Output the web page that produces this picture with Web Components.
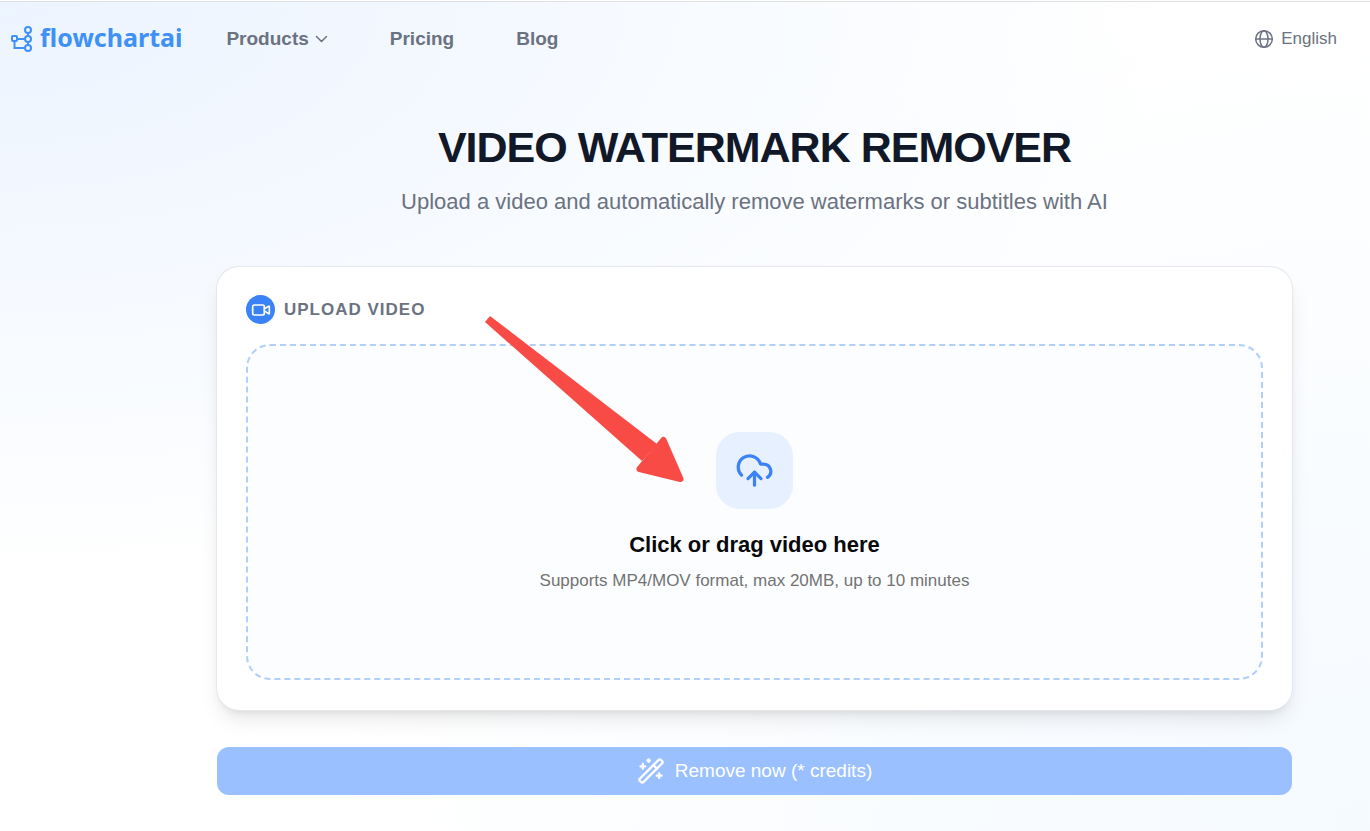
<!DOCTYPE html>
<html lang="en">
<head>
    <meta charset="UTF-8">
    <meta name="viewport" content="width=device-width, initial-scale=1.0">
    <title>Video Watermark Remover</title>
    <style>
        :root {
            --blue: #3b82f6;
            --gray: #6b7280;
            --ink: #111827;
        }

        body {
            margin: 0;
            font-family: "Liberation Sans", Arial, sans-serif;
            color: var(--ink);
        }
    </style>
</head>
<body>
    <template id="app-page">
        <style>
            :host {
                display: block;
                box-sizing: border-box;
                min-height: 100vh;
                border-top: 1px solid #fff;
                background:
                    radial-gradient(ellipse 85% 70% at 0 0, #ecf4ff, rgba(255, 255, 255, 0)),
                    radial-gradient(ellipse 75% 100% at 100% 100%, #f5faff, rgba(255, 255, 255, 0)),
                    #fff;
            }
            main {
                padding: 42px 78px 36px 217px;
            }
        </style>
        <slot name="header"></slot>
        <main><slot></slot></main>
    </template>

    <template id="site-header">
        <style>
            :host {
                display: flex;
                align-items: center;
                height: 73px;
                padding: 0 33px 0 10px;
                border-top: 1px solid #dedfe1;
            }
            .logo {
                display: flex;
                align-items: center;
                gap: 7px;
                color: #4091f7;
                font: bold 25px/32px "Noto Sans", sans-serif;
                text-decoration: none;
            }
            .logo span {
                padding-bottom: 3px;
            }
            nav {
                display: flex;
                gap: 62px;
                flex: 1;
                margin-left: 44px;
            }
            ::slotted(*) {
                color: var(--gray);
            }
        </style>
        <a class="logo" href="#">
            <svg width="23" height="28" viewBox="0 0 23 28" fill="none" stroke="currentColor" stroke-width="2" aria-hidden="true">
                <rect x="2" y="11" width="5" height="5" rx="1"/>
                <circle cx="18" cy="5" r="3"/>
                <circle cx="18" cy="14" r="3"/>
                <circle cx="18" cy="23" r="3"/>
                <path d="M7 14h8M18 8v3M18 17v3M4.500 16v7H15"/>
            </svg>
            <span>flowchartai</span>
        </a>
        <nav><slot></slot></nav>
        <slot name="end"></slot>
    </template>

    <template id="nav-link">
        <style>
            :host {
                display: block;
            }
            a, button {
                display: flex;
                align-items: center;
                gap: 6px;
                padding: 0;
                border: 0;
                background: none;
                color: inherit;
                font: bold 19px/24px "Liberation Sans", Arial, sans-serif;
                text-decoration: none;
            }
        </style>
    </template>

    <template id="language-button">
        <style>
            :host {
                display: block;
            }
            button {
                display: flex;
                align-items: center;
                gap: 7px;
                padding: 0;
                border: 0;
                background: none;
                color: inherit;
                font: 17px/24px "Liberation Sans", Arial, sans-serif;
            }
        </style>
        <button type="button">
            <svg width="20" height="20" viewBox="0 0 20 20" fill="none" stroke="currentColor" stroke-width="1.500" aria-hidden="true">
                <circle cx="10" cy="10" r="8.300"/>
                <ellipse cx="10" cy="10" rx="4" ry="8.300"/>
                <path d="M1.700 10h16.600"/>
            </svg>
            <slot></slot>
        </button>
    </template>

    <template id="page-title">
        <style>
            :host {
                display: block;
                text-align: center;
            }
            h1 {
                margin: 0;
                font-size: 43px;
                line-height: 60px;
                letter-spacing: -1px;
            }
            p {
                margin: 10px 0 0;
                color: var(--gray);
                font-size: 22px;
                line-height: 30px;
            }
        </style>
        <h1><slot></slot></h1>
        <p><slot name="subtitle"></slot></p>
    </template>

    <template id="upload-card">
        <style>
            :host {
                display: block;
                position: relative;
                margin-top: 50px;
                padding: 28px 29px 30px;
                border-radius: 22px;
                background: #fff;
                box-shadow: 0 0 0 1px #e5e7eb, 0 12px 22px -4px rgba(0, 0, 0, .1), 0 5px 8px -4px rgba(0, 0, 0, .1);
            }
            h2 {
                display: flex;
                align-items: center;
                gap: 9px;
                margin: 0 0 20px;
                color: var(--gray);
                font-size: 17px;
                line-height: 29px;
                letter-spacing: 1px;
            }
            .badge {
                display: grid;
                place-items: center;
                width: 29px;
                height: 29px;
                border-radius: 50%;
                background: var(--blue);
                color: #fff;
            }
        </style>
        <h2>
            <span class="badge">
                <svg width="20" height="20" viewBox="0 0 24 24" fill="none" stroke="currentColor" stroke-width="2" stroke-linecap="round" stroke-linejoin="round" aria-hidden="true">
                    <path d="m16 13 5.223 3.482a.5.5 0 0 0 .777-.416V7.870a.5.5 0 0 0-.752-.432L16 10.500"/>
                    <rect x="2" y="6" width="14" height="12" rx="2"/>
                </svg>
            </span>
            <slot name="heading"></slot>
        </h2>
        <slot></slot>
    </template>

    <template id="drop-zone">
        <style>
            :host {
                display: block;
            }
            button {
                display: flex;
                flex-direction: column;
                align-items: center;
                justify-content: center;
                box-sizing: border-box;
                width: 100%;
                min-height: 336px;
                padding: 24px;
                border: 2px dashed #b1cff8;
                border-radius: 24px;
                background: #fbfdff;
                color: #09090b;
                font: bold 22px/30px "Liberation Sans", Arial, sans-serif;
            }
            .tile {
                display: grid;
                place-items: center;
                width: 77px;
                height: 77px;
                margin-bottom: 21px;
                border-radius: 24px;
                background: #e7f0ff;
                color: var(--blue);
            }
            small {
                margin-top: 9px;
                color: #737373;
                font-size: 17px;
                font-weight: normal;
                line-height: 24px;
            }
        </style>
        <button type="button">
            <span class="tile">
                <svg width="39" height="39" viewBox="0 0 24 24" fill="none" stroke="currentColor" stroke-width="2" stroke-linecap="round" stroke-linejoin="round" aria-hidden="true">
                    <path d="M12 13v8"/>
                    <path d="M4 14.899A7 7 0 1 1 15.710 8h1.790a4.500 4.500 0 0 1 2.500 8.242"/>
                    <path d="m8 17 4-4 4 4"/>
                </svg>
            </span>
            <slot></slot>
            <small><slot name="hint"></slot></small>
        </button>
    </template>

    <template id="pointer-arrow">
        <style>
            /* lies over the card, pointing at the upload tile */
            :host {
                display: block;
                position: absolute;
                top: 48px;
                right: 607px;
                pointer-events: none;
            }
            svg {
                display: block;
            }
        </style>
        <svg width="200" height="170" viewBox="0 0 200 170" fill="#f84b46" stroke="#f84b46" aria-hidden="true">
            <path stroke="none" d="M5 1 L172 129 L157 146 L0 7 Z"/>
            <path stroke-width="6" stroke-linejoin="round" d="M178.500 125 L195.500 164 L154.500 154 Z"/>
        </svg>
    </template>

    <template id="action-button">
        <style>
            :host {
                display: block;
                margin-top: 37px;
            }
            button {
                display: flex;
                align-items: center;
                justify-content: center;
                gap: 10px;
                width: 100%;
                height: 48px;
                padding: 0;
                border: 0;
                border-radius: 12px;
                background: #9bc0ff;
                color: #fff;
                font: 19px/24px "Liberation Sans", Arial, sans-serif;
            }
        </style>
        <button type="button" disabled>
            <svg width="28" height="28" viewBox="0 0 24 24" fill="none" stroke="currentColor" stroke-width="2" stroke-linecap="round" stroke-linejoin="round" aria-hidden="true">
                <path d="m21.640 3.640-1.280-1.280a1.210 1.210 0 0 0-1.720 0L2.360 18.640a1.210 1.210 0 0 0 0 1.720l1.280 1.280a1.200 1.200 0 0 0 1.720 0L21.640 5.360a1.200 1.200 0 0 0 0-1.720"/>
                <path d="m14 7 3 3M5 6v4M19 14v4M10 2v2M7 8H3M21 16h-4M11 3H9"/>
            </svg>
            <span><slot></slot></span>
        </button>
    </template>

    <app-page>
        <site-header slot="header">
            <nav-link menu>Products</nav-link>
            <nav-link href="#pricing">Pricing</nav-link>
            <nav-link href="#blog">Blog</nav-link>
            <language-button slot="end">English</language-button>
        </site-header>
        <page-title>
            VIDEO WATERMARK REMOVER
            <span slot="subtitle">Upload a video and automatically remove watermarks or subtitles with AI</span>
        </page-title>
        <upload-card>
            <span slot="heading">UPLOAD VIDEO</span>
            <drop-zone>
                <span>Click or drag video here</span>
                <span slot="hint">Supports MP4/MOV format, max 20MB, up to 10 minutes</span>
            </drop-zone>
            <pointer-arrow></pointer-arrow>
        </upload-card>
        <action-button>Remove now (* credits)</action-button>
    </app-page>

    <script>
        class TemplateElement extends HTMLElement {
            constructor() {
                super();
                let template = document.getElementById(this.localName);
                this.attachShadow({mode: 'open'});
                this.shadowRoot.appendChild(document.importNode(template.content, true));
            }
        }

        // A plain link, or a button with a chevron when the "menu" attribute is set
        class NavLink extends TemplateElement {
            connectedCallback() {
                if (this.shadowRoot.querySelector('slot')) return;
                let isMenu = this.hasAttribute('menu');
                let control = document.createElement(isMenu ? 'button' : 'a');
                control.appendChild(document.createElement('slot'));

                if (isMenu) {
                    control.type = 'button';
                    control.insertAdjacentHTML('beforeend',
                        '<svg width="13" height="8" viewBox="0 0 13 8" fill="none" stroke="currentColor" stroke-width="1.500" stroke-linecap="round" stroke-linejoin="round" aria-hidden="true"><path d="M1.500 1.500l5 5 5-5"/></svg>');
                } else {
                    control.href = this.getAttribute('href');
                }

                this.shadowRoot.appendChild(control);
            }
        }

        customElements.define('app-page', class extends TemplateElement {});
        customElements.define('site-header', class extends TemplateElement {});
        customElements.define('nav-link', NavLink);
        customElements.define('language-button', class extends TemplateElement {});
        customElements.define('page-title', class extends TemplateElement {});
        customElements.define('upload-card', class extends TemplateElement {});
        customElements.define('drop-zone', class extends TemplateElement {});
        customElements.define('pointer-arrow', class extends TemplateElement {});
        customElements.define('action-button', class extends TemplateElement {});
    </script>
</body>
</html>
